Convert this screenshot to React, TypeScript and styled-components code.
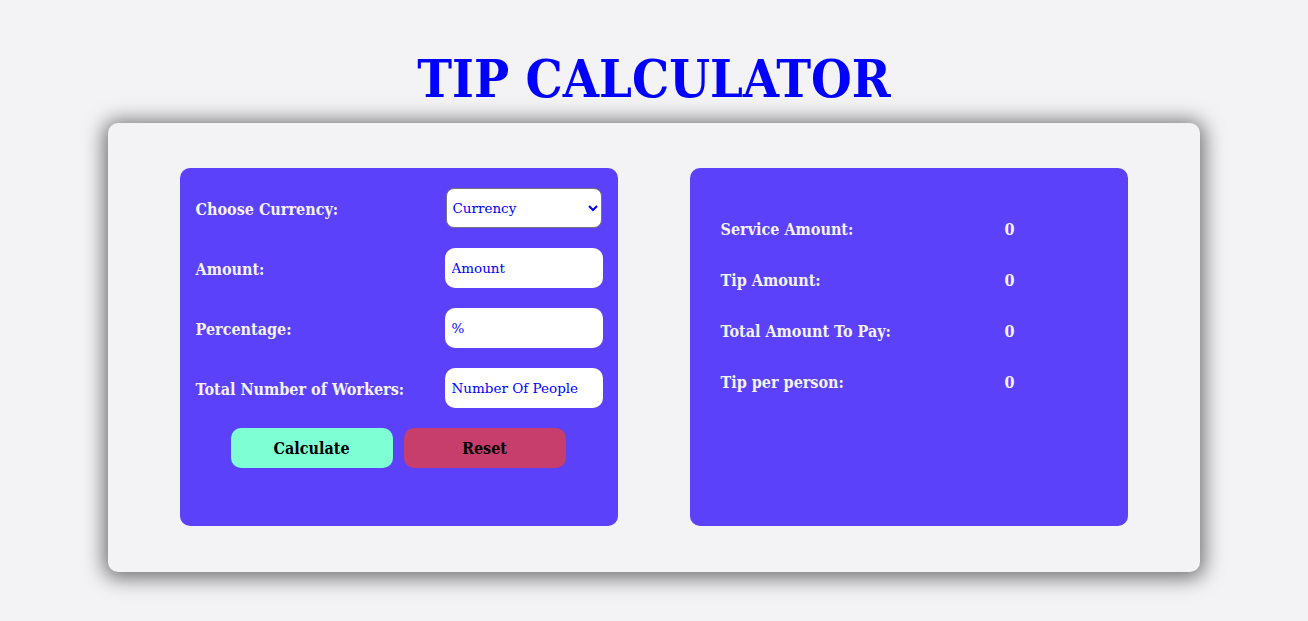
import React from "react";
import styled, { createGlobalStyle } from "styled-components";

const Global = createGlobalStyle`
  html, body { margin: 0; padding: 0; background: #f3f3f6; }
  body { font-family: "DejaVu Serif Condensed", "DejaVu Serif", "Liberation Serif", serif; }
  * { box-sizing: border-box; }
`;

const Page = styled.div`
  display: flex;
  flex-direction: column;
  align-items: center;
  padding: 50px 0 60px;
  min-height: 621px;
`;

const Title = styled.h1`
  margin: 0 0 16px;
  font-family: "DejaVu Serif Condensed", "DejaVu Serif", serif;
  font-size: 52px;
  line-height: 57px;
  font-weight: 700;
  color: #0000ff;
`;

const Card = styled.div`
  width: 1092px;
  height: 449px;
  margin-right: 1px;
  background: #f3f3f6;
  border-radius: 10px;
  box-shadow: 0 2px 20px 4px rgba(0, 0, 0, 0.55);
  display: flex;
  justify-content: space-between;
  padding: 45px 72px;
`;

const Panel = styled.div`
  width: 438px;
  height: 358px;
  background: #5b41f9;
  border-radius: 10px;
  color: #f3f3f6;
`;

const InputPanel = styled(Panel)`
  display: flex;
  flex-direction: column;
  padding: 20px 15px 0 14px;
  gap: 20px;
`;

const Row = styled.div`
  display: flex;
  align-items: center;
  justify-content: space-between;
  height: 40px;
`;

const Label = styled.label`
  font-size: 16px;
  font-weight: 700;
  padding: 2px 0 0 2px;
`;

const Field = styled.input`
  width: 158px;
  height: 40px;
  border: none;
  border-radius: 10px;
  background: #fff;
  padding: 0 7px;
  font-family: "DejaVu Serif", serif;
  font-size: 13.5px;
  color: #0000ff;
  outline: none;
  &::placeholder { color: #0000ff; opacity: 1; }
`;

const Select = styled.select`
  width: 156px;
  height: 40px;
  margin-right: 1px;
  border: 1px solid #767676;
  border-radius: 8px;
  background: #fff;
  padding: 0 2px;
  font-family: "DejaVu Serif", serif;
  font-size: 13.5px;
  color: #0000ff;
`;

const Buttons = styled.div`
  display: flex;
  justify-content: center;
  gap: 11px;
`;

const Button = styled.button<{ $bg: string }>`
  width: 162px;
  height: 40px;
  border: none;
  border-radius: 10px;
  background: ${(p) => p.$bg};
  color: #000;
  font-family: "DejaVu Serif Condensed", "DejaVu Serif", serif;
  font-size: 16px;
  font-weight: 700;
  padding-top: 2px;
`;

const ResultPanel = styled(Panel)`
  display: flex;
  flex-direction: column;
  padding: 51px 0 0 31px;
  gap: 31px;
`;

const ResultRow = styled.div`
  display: grid;
  grid-template-columns: 284px auto;
  height: 20px;
  align-items: center;
  font-size: 16px;
  font-weight: 700;
`;

const results = [
  "Service Amount:",
  "Tip Amount:",
  "Total Amount To Pay:",
  "Tip per person:",
];

export default function App() {
  return (
    <>
      <Global />
      <Page>
        <Title>TIP CALCULATOR</Title>
        <Card>
          <InputPanel>
            <Row>
              <Label>Choose Currency:</Label>
              <Select defaultValue="">
                <option value="">Currency</option>
                <option value="usd">USD</option>
                <option value="eur">EUR</option>
              </Select>
            </Row>
            <Row>
              <Label>Amount:</Label>
              <Field placeholder="Amount" />
            </Row>
            <Row>
              <Label>Percentage:</Label>
              <Field placeholder="%" />
            </Row>
            <Row>
              <Label>Total Number of Workers:</Label>
              <Field placeholder="Number Of People" />
            </Row>
            <Buttons>
              <Button $bg="#7fffd4">Calculate</Button>
              <Button $bg="#c73d6b">Reset</Button>
            </Buttons>
          </InputPanel>
          <ResultPanel>
            {results.map((r) => (
              <ResultRow key={r}>
                <span>{r}</span>
                <span>0</span>
              </ResultRow>
            ))}
          </ResultPanel>
        </Card>
      </Page>
    </>
  );
}
